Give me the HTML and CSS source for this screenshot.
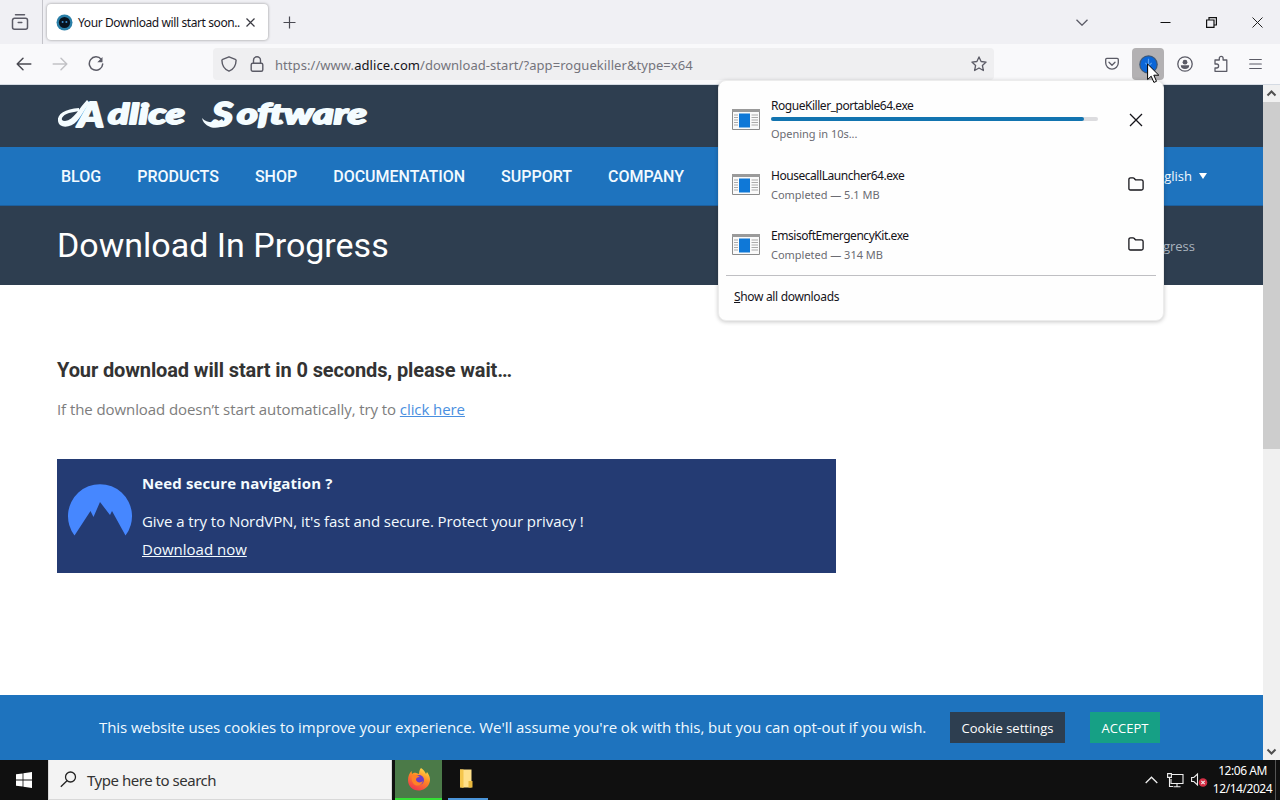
FILE: index.html
```html
<!DOCTYPE html>
<html lang="en">
<head>
    <meta charset="UTF-8">
    <meta name="viewport" content="width=device-width, initial-scale=1.0">
    <title>Your Download will start soon...</title>
    <link rel="stylesheet" href="styles.css">
</head>
<body>
    <!-- Tab strip -->
    <header class="tab-strip">
        <div class="firefox-view">
            <svg width="18" height="18" viewBox="0 0 18 18" fill="none" stroke="#5b5b66" stroke-width="1.5" stroke-linecap="round">
                <path d="M4.5 1.8h9M3.5 5.3h11a2 2 0 0 1 2 2v6.900a2 2 0 0 1-2 2h-11a2 2 0 0 1-2-2v-6.900a2 2 0 0 1 2-2zM7.200 9.500h3.600"/>
            </svg>
        </div>
        <div class="tab">
            <svg width="17" height="17" viewBox="0 0 17 17">
                <circle cx="8.500" cy="8.500" r="8" fill="#2a7fa8"/>
                <circle cx="8.500" cy="8.500" r="5.600" fill="#07131f"/>
                <circle cx="6.600" cy="8" r="1" fill="#3b8ed0"/>
                <circle cx="10.400" cy="8" r="1" fill="#3b8ed0"/>
            </svg>
            <span class="tab-title">Your Download will start soon..</span>
            <svg class="tab-close" width="9" height="9" viewBox="0 0 9 9" stroke="#3a3a42" stroke-width="1.200"><path d="M.5.5l8 8M8.500.5l-8 8"/></svg>
        </div>
        <svg class="new-tab" width="13" height="13" viewBox="0 0 13 13" stroke="#4a4a52" stroke-width="1.200"><path d="M6.500.5v12M.5 6.500h12"/></svg>
        <div class="window-controls">
            <svg width="12" height="7" viewBox="0 0 12 7" fill="none" stroke="#5b5b66" stroke-width="1.300"><path d="M.5.700L6 6.200 11.500.700"/></svg>
            <svg width="11" height="11" viewBox="0 0 11 11" stroke="#111"><path d="M.5 5.500h10"/></svg>
            <svg width="11" height="11" viewBox="0 0 11 11" fill="none" stroke="#111" stroke-width="1.200"><path d="M.6 3h7.400v7.400H.6zM3 3V.6h7.400V8H8"/></svg>
            <svg width="11" height="11" viewBox="0 0 11 11" stroke="#222"><path d="M.5.5l10 10M10.500.5l-10 10"/></svg>
        </div>
    </header>

    <!-- Toolbar -->
    <nav class="toolbar">
        <div class="nav-buttons">
            <svg width="16" height="14" viewBox="0 0 16 14" fill="none" stroke="#4a4a52" stroke-width="1.500" stroke-linecap="round" stroke-linejoin="round"><path d="M7 1.200L1.200 7 7 12.800M1.200 7h13.600"/></svg>
            <svg width="16" height="14" viewBox="0 0 16 14" fill="none" stroke="#c2c2c6" stroke-width="1.500" stroke-linecap="round" stroke-linejoin="round"><path d="M9 1.200L14.800 7 9 12.800M14.800 7H1.200"/></svg>
            <svg width="16" height="16" viewBox="0 0 16 16" fill="none" stroke="#5b5b66" stroke-width="1.500" stroke-linecap="round"><path d="M13.300 3.400A6.700 6.700 0 1 0 14.700 8"/><path d="M14.500 1v5.200H9.300z" fill="#5b5b66" stroke="none"/></svg>
        </div>
        <div class="url-bar">
            <svg width="16" height="16" viewBox="0 0 16 16" fill="none" stroke="#5b5b66" stroke-width="1.400" stroke-linejoin="round"><path d="M8 .8l6.300 2.500c.5.200.8.500.8 1C15 9.500 12.800 13.300 8 15.200 3.200 13.300 1 9.500.9 4.300c0-.5.300-.8.800-1z"/></svg>
            <svg width="14" height="16" viewBox="0 0 14 16" fill="none" stroke="#5b5b66" stroke-width="1.400"><rect x="1.200" y="7.200" width="11.600" height="8" rx="1.500"/><path d="M3.500 7V4.300a3.500 3.500 0 0 1 7 0V7"/></svg>
            <span class="url">https://www.<b>adlice.com</b>/download-start/?app=roguekiller&amp;type=x64</span>
            <svg class="bookmark" width="16" height="16" viewBox="0 0 16 16" fill="none" stroke="#5b5b66" stroke-width="1.300" stroke-linejoin="round"><path d="M8 .9l2.100 4.600 5 .6-3.700 3.400 1 5L8 12l-4.400 2.500 1-5L.9 6.100l5-.6z"/></svg>
        </div>
        <div class="toolbar-icons">
            <svg width="14" height="14" viewBox="0 0 14 14" fill="none" stroke="#5b5b66" stroke-width="1.300" stroke-linecap="round" stroke-linejoin="round"><path d="M1.800 1.300h10.400q1.100 0 1.100 1.100v3.300a6.300 6.500 0 0 1-12.600 0V2.400q0-1.100 1.100-1.100zM4 5.300l3 2.900 3-2.900"/></svg>
            <div class="downloads-button">
                <svg width="19" height="19" viewBox="0 0 18 18"><circle cx="9" cy="9" r="8.800" fill="#3d5878"/><circle cx="9" cy="9" r="7.600" fill="#0a66d8"/><path d="M9 3.500v7M6 7.500l3 3 3-3" fill="none" stroke="#5aa2f0" stroke-width="1.100"/></svg>
            </div>
            <svg width="16" height="16" viewBox="0 0 16 16" fill="none" stroke="#5b5b66" stroke-width="1.300"><circle cx="8" cy="8" r="7.200"/><circle cx="8" cy="6.200" r="2.400" fill="#5b5b66" stroke="none"/><path d="M3.800 9.300h8.400a4.200 3.800 0 0 1-8.400 0z" fill="#5b5b66" stroke="none"/></svg>
            <svg width="16" height="18" viewBox="0 0 16 18" fill="none" stroke="#5b5b66" stroke-width="1.300" stroke-linejoin="round"><path d="M2 5h4.300V3.200a1.900 1.900 0 0 1 3.800 0V5h3.700v11.300H2V13h1.600a2 2 0 0 0 0-4H2z"/></svg>
            <svg width="13" height="12" viewBox="0 0 13 12" stroke="#5b5b66" stroke-width="1.200" stroke-linecap="round"><path d="M.7 1.500h11.600M.7 6h11.600M.7 10.500h11.600"/></svg>
        </div>
    </nav>

    <!-- Page content -->
    <div class="viewport">
        <main class="page">
            <div class="site-header">
                <svg class="logo" width="330" height="58" viewBox="0 -10 330 58" fill="#f4fcff" stroke="#f4fcff" stroke-linejoin="round">
                    <path d="M30 4C22 12 17 24 8 25c-6 0-3-6 4-8l10-2v-3C8 13 0 18 1 25c1 8 13 7 19 0 6-7 8-13 13-18z" stroke="none"/>
                    <path d="M145 22c5 6 15 5 20 1l3 5c-7 7-21 4-23-6z" stroke="none"/>
                    <g stroke-width="1.800">
                        <text x="21" y="31" font-size="34" textLength="26" lengthAdjust="spacingAndGlyphs">A</text>
                        <text x="51" y="27.500" font-size="28" textLength="77" lengthAdjust="spacingAndGlyphs">dlice</text>
                        <text x="155" y="30" font-size="33" textLength="21" lengthAdjust="spacingAndGlyphs">S</text>
                        <text x="180" y="27.500" font-size="28" textLength="130" lengthAdjust="spacingAndGlyphs">oftware</text>
                    </g>
                </svg>
            </div>
            <div class="site-nav">
                <a>BLOG</a><a>PRODUCTS</a><a>SHOP</a><a>DOCUMENTATION</a><a>SUPPORT</a><a>COMPANY</a>
                <span class="language">English <i class="caret"></i></span>
            </div>
            <div class="title-bar">
                <h1>Download In Progress</h1>
                <span class="breadcrumb">Download In Progress</span>
            </div>
            <section class="content">
                <h2>Your download will start in 0 seconds, please wait…</h2>
                <p class="hint">If the download doesn’t start automatically, try to <a>click here</a></p>
                <div class="vpn-banner">
                    <svg width="64" height="52" viewBox="0 0 64 52" fill="#4687ff"><path d="M6.500 51.500A32 32 0 1 1 57.500 51.500L44 27l-2 4L32 18l-6.500 15-3-6z"/></svg>
                    <div class="vpn-text">
                        <strong>Need secure navigation ?</strong>
                        <span>Give a try to NordVPN, it's fast and secure. Protect your privacy !</span>
                        <a>Download now</a>
                    </div>
                </div>
            </section>
            <div class="cookie-bar">
                <span class="cookie-text">This website uses cookies to improve your experience. We'll assume you're ok with this, but you can opt-out if you wish.</span>
                <button class="cookie-settings">Cookie settings</button>
                <button class="cookie-accept">ACCEPT</button>
            </div>
        </main>
        <div class="scrollbar">
            <svg width="17" height="17" viewBox="0 0 17 17" fill="none" stroke="#505050" stroke-width="2"><path d="M4.500 10.500l4-4 4 4"/></svg>
            <div class="thumb"></div>
            <svg width="17" height="17" viewBox="0 0 17 17" fill="none" stroke="#505050" stroke-width="2"><path d="M4.500 6.500l4 4 4-4"/></svg>
        </div>
    </div>

    <!-- Downloads panel -->
    <div class="downloads-panel">
        <div class="download first">
            <svg class="exe-icon" width="28" height="21" viewBox="0 0 28 21"><path d="M.5.5h27v20H.5z" fill="#fafafa" stroke="#8c8c8c"/><path d="M0 0h28v3H0z" fill="#9a9a9a"/><path d="M7 4.500h11v14H7z" fill="#0f78d7"/><path d="M2 6h4M2 8.500h4M2 11h4M2 13.500h4M2 16h4M19.500 6h6.500M19.500 8.500h6.500M19.500 11h6.500M19.500 13.500h6.500M19.500 16h6.500" stroke="#aaa"/></svg>
            <div class="download-info">
                <span class="name">RogueKiller_portable64.exe</span>
                <div class="progress"><div class="progress-fill"></div></div>
                <span class="status">Opening in 10s...</span>
            </div>
            <svg width="14" height="14" viewBox="0 0 14 14" stroke="#15141a" stroke-width="1.300"><path d="M1 1l12 12M13 1L1 13"/></svg>
        </div>
        <div class="download">
            <svg class="exe-icon" width="28" height="21" viewBox="0 0 28 21"><path d="M.5.5h27v20H.5z" fill="#fafafa" stroke="#8c8c8c"/><path d="M0 0h28v3H0z" fill="#9a9a9a"/><path d="M7 4.500h11v14H7z" fill="#0f78d7"/><path d="M2 6h4M2 8.500h4M2 11h4M2 13.500h4M2 16h4M19.500 6h6.500M19.500 8.500h6.500M19.500 11h6.500M19.500 13.500h6.500M19.500 16h6.500" stroke="#aaa"/></svg>
            <div class="download-info">
                <span class="name">HousecallLauncher64.exe</span>
                <span class="status">Completed — 5.1 MB</span>
            </div>
            <svg width="16" height="14" viewBox="0 0 16 14" fill="none" stroke="#15141a" stroke-width="1.300"><path d="M.9 11.500v-9q0-1.700 1.700-1.700h2.500q.6 0 1 .5l1.300 1.500h6q1.700 0 1.700 1.700v7q0 1.500-1.600 1.500H2.500q-1.600 0-1.600-1.500z"/></svg>
        </div>
        <div class="download">
            <svg class="exe-icon" width="28" height="21" viewBox="0 0 28 21"><path d="M.5.5h27v20H.5z" fill="#fafafa" stroke="#8c8c8c"/><path d="M0 0h28v3H0z" fill="#9a9a9a"/><path d="M7 4.500h11v14H7z" fill="#0f78d7"/><path d="M2 6h4M2 8.500h4M2 11h4M2 13.500h4M2 16h4M19.500 6h6.500M19.500 8.500h6.500M19.500 11h6.500M19.500 13.500h6.500M19.500 16h6.500" stroke="#aaa"/></svg>
            <div class="download-info">
                <span class="name">EmsisoftEmergencyKit.exe</span>
                <span class="status">Completed — 314 MB</span>
            </div>
            <svg width="16" height="14" viewBox="0 0 16 14" fill="none" stroke="#15141a" stroke-width="1.300"><path d="M.9 11.500v-9q0-1.700 1.700-1.700h2.500q.6 0 1 .5l1.300 1.500h6q1.700 0 1.700 1.700v7q0 1.500-1.600 1.500H2.500q-1.600 0-1.600-1.500z"/></svg>
        </div>
        <div class="show-all"><span><u>S</u>how all downloads</span></div>
    </div>

    <!-- Mouse pointer -->
    <svg class="cursor" width="13" height="21" viewBox="0 0 13 21" fill="#fff" stroke="#000" stroke-linejoin="round"><path d="M.6 1v15.500l3.600-3.300 2.700 6.200 2.600-1.100-2.700-6.100h5z"/></svg>

    <!-- Taskbar -->
    <footer class="taskbar">
        <div class="start">
            <svg width="16" height="16" viewBox="0 0 16 16" fill="#fff"><path d="M0 2.300L6.600 1.400v6.200H0zM7.400 1.300L16 0v7.600H7.400zM0 8.400h6.600v6.200L0 13.700zM7.400 8.400H16V16l-8.600-1.200z"/></svg>
        </div>
        <div class="search">
            <svg width="17" height="17" viewBox="0 0 17 17" fill="none" stroke="#222" stroke-width="1.300"><circle cx="10.500" cy="6" r="5"/><path d="M7 9.700L.8 15.800"/></svg>
            <span>Type here to search</span>
        </div>
        <div class="app firefox">
            <svg width="24" height="24" viewBox="0 0 24 24">
                <defs><linearGradient id="flame" x1=".8" y1="0" x2=".3" y2="1"><stop offset="0" stop-color="#ffe14a"/><stop offset=".45" stop-color="#ff8a24"/><stop offset="1" stop-color="#f0344f"/></linearGradient></defs>
                <path d="M14 1c3 2 4 4 5 6l1-2c3 4 4 8 2 12-2 4-6 6.500-10.500 6.500C5.500 23.500 1 19 1 13c0-4 1.500-7 3.500-9l.5 3c1-1 2-1.500 3.500-1.300L12 7c.2-2.500.5-4.500 2-6z" fill="url(#flame)"/>
                <circle cx="12" cy="13" r="5" fill="#6a3cc8"/>
                <path d="M5 9c3-2 6-1 8 1-3 0-4 1-4 3 1 3 5 3 7 1-1 4-5 5.500-8 4C5 16 4 12 5 9z" fill="#ff8226"/>
            </svg>
        </div>
        <div class="app explorer">
            <svg width="14" height="20" viewBox="0 0 14 20"><path d="M1 .5h11.500v18H1z" fill="#ffe08a"/><path d="M1 .5h3.500v18.500L1 18z" fill="#f5c64c"/><path d="M9.500 12h4v6.500h-4z" fill="#e9b93e"/></svg>
        </div>
        <div class="tray">
            <svg width="13" height="8" viewBox="0 0 13 8" fill="none" stroke="#eee" stroke-width="1.300"><path d="M.7 7l5.800-5.800L12.300 7"/></svg>
            <svg width="17" height="15" viewBox="0 0 17 15" fill="none" stroke="#eee" stroke-width="1.100"><path d="M5 1.500h11v9H4V6M10 10.500v3M6.500 13.700h7M.6.600h3.800v3.800H.6zM2.500 4.500v9H6"/></svg>
            <svg width="17" height="16" viewBox="0 0 17 16" fill="none" stroke="#eee" stroke-width="1.100"><path d="M.6 5.500h2.200L6.500 2v11L2.800 9.500H.6z"/><circle cx="12" cy="10.500" r="4.300" fill="#d32f45" stroke="none"/><path d="M10.300 8.800l3.400 3.400M13.700 8.800l-3.400 3.400"/></svg>
            <div class="clock"><span class="time">12:06 AM</span><span class="date">12/14/2024</span></div>
        </div>
    </footer>
</body>
</html>
```
FILE: styles.css
```css
:root {
    --blue: #1e73be;
    --navy: #2e3e50;
    --chrome-bg: #f0f0f4;
    --toolbar-bg: #f9f9fb;
    --ui-font: "Noto Sans", "Open Sans", sans-serif;
    --page-font: "Open Sans", "Noto Sans", sans-serif;
}

* {
    box-sizing: border-box;
}

body {
    display: flex;
    flex-direction: column;
    width: 1280px;
    height: 800px;
    margin: 0;
    overflow: hidden;
    font-family: var(--ui-font);
    white-space: nowrap;
    background: #fff;
}

svg {
    display: block;
    flex-shrink: 0;
}

/* Tab strip */
.tab-strip {
    display: flex;
    align-items: center;
    height: 44px;
    background: var(--chrome-bg);
}

.firefox-view {
    display: flex;
    align-items: center;
    width: 43px;
    height: 44px;
    padding-left: 11px;
    border-right: 1px solid #c4c4ca;
}

.tab {
    display: flex;
    align-items: center;
    width: 221px;
    height: 36px;
    margin-left: 4px;
    padding-left: 9px;
    background: #fff;
    border-radius: 4px;
    box-shadow: 0 0 3px rgba(0, 0, 0, 0.4);
}

.tab-title {
    width: 162px;
    margin-left: 5px;
    padding-top: 1px;
    font-size: 12px;
    letter-spacing: -0.4px;
    color: #15141a;
}

.tab-close {
    margin-left: 6px;
}

.new-tab {
    margin-left: 15px;
}

.window-controls {
    display: flex;
    align-items: center;
    gap: 35px;
    margin-left: auto;
    padding-right: 17px;
}

.window-controls svg:first-child {
    margin-right: 37px;
}

/* Toolbar */
.toolbar {
    display: flex;
    align-items: center;
    height: 41px;
    background: var(--toolbar-bg);
    border-bottom: 1px solid #d5dbe3;
}

.nav-buttons {
    display: flex;
    align-items: center;
    gap: 20px;
    width: 213px;
    padding-left: 16px;
}

.url-bar {
    display: flex;
    align-items: center;
    width: 781px;
    height: 32px;
    padding: 0 7px 0 8px;
    background: #efeff1;
    border-radius: 4px;
}

.url-bar svg + svg {
    margin-left: 13px;
}

.url {
    margin-left: 11px;
    padding-top: 2px;
    font-size: 13px;
    letter-spacing: 0.06px;
    color: #74747c;
}

.url b {
    font-weight: 400;
    color: #15141a;
}

.bookmark {
    margin-left: auto;
}

.toolbar-icons {
    display: flex;
    align-items: center;
    margin-left: auto;
    padding-right: 18px;
}

.downloads-button {
    display: flex;
    align-items: center;
    justify-content: center;
    width: 32px;
    height: 32px;
    margin: 0 13px;
    background: #b3b1b3;
    border-radius: 4px;
}

.downloads-button ~ svg + svg {
    margin-left: 20px;
}

/* Page */
.viewport {
    display: flex;
    height: 675px;
}

.page {
    display: flex;
    flex-direction: column;
    width: 1263px;
    font-family: var(--page-font);
}

.site-header {
    height: 62px;
    padding: 1px 0 0 57px;
    background: var(--navy);
}

.logo {
    font-family: Lato, sans-serif;
    font-style: italic;
    font-weight: 900;
}

.site-nav {
    display: flex;
    align-items: center;
    gap: 36px;
    height: 59px;
    padding: 0 56px 0 61px;
    border-bottom: 1px solid #1c5f9e;
    background: var(--blue);
    font-family: Roboto, sans-serif;
    font-size: 16px;
    font-weight: 500;
    color: #f2faff;
}

.language {
    display: flex;
    align-items: center;
    gap: 7px;
    margin-left: auto;
    font-family: var(--page-font);
    font-size: 13px;
    font-weight: 400;
}

.caret {
    border: 4.5px solid transparent;
    border-top: 6px solid #fff;
    border-bottom: 0;
}

.title-bar {
    display: flex;
    align-items: center;
    justify-content: space-between;
    height: 79px;
    padding: 0 68px 2px 57px;
    background: var(--navy);
    color: #fff;
}

h1 {
    margin: 0;
    font-family: Roboto, sans-serif;
    font-size: 34px;
    font-weight: 400;
}

.breadcrumb {
    padding-top: 3px;
    font-size: 13px;
    color: #aab4bf;
}

.content {
    flex: 1;
    padding: 72px 57px 0;
    background: #fff;
}

h2 {
    margin: 0;
    font-family: Roboto, sans-serif;
    font-size: 20px;
    font-weight: 700;
    line-height: 26px;
    letter-spacing: -0.12px;
    color: #333;
}

.hint {
    margin: 13px 0 37px;
    font-size: 15px;
    line-height: 26px;
    letter-spacing: -0.08px;
    color: #7d7d7d;
}

.hint a {
    color: #4a8fe0;
    text-decoration: underline;
}

.vpn-banner {
    display: flex;
    gap: 10px;
    width: 779px;
    height: 114px;
    padding: 10px 11px;
    background: #243b73;
}

.vpn-banner svg {
    margin-top: 15px;
}

.vpn-text {
    display: flex;
    flex-direction: column;
    font-size: 15px;
    line-height: 28px;
    letter-spacing: -0.07px;
    color: #f4fbff;
}

.vpn-text strong {
    margin-bottom: 10px;
    letter-spacing: 0.12px;
}

.vpn-text a {
    letter-spacing: 0;
    text-decoration: underline;
}

.cookie-bar {
    display: flex;
    align-items: center;
    height: 65px;
    padding-left: 99px;
    background: var(--blue);
    color: #f2faff;
    font-size: 15px;
}

.cookie-bar button {
    height: 31px;
    padding: 0;
    border: 0;
    font-family: var(--page-font);
    font-size: 13px;
    color: #fff;
}

.cookie-text {
    width: 851px;
    padding-bottom: 2px;
    letter-spacing: -0.05px;
}

.cookie-bar .cookie-settings {
    width: 115px;
    margin-right: 25px;
    background: #2d3e50;
}

.cookie-bar .cookie-accept {
    width: 70px;
    background: #16a085;
}

.scrollbar {
    display: flex;
    flex-direction: column;
    width: 17px;
    background: #f0f0f0;
}

.thumb {
    height: 347px;
    margin-bottom: auto;
    background: #cdcdcd;
}

/* Downloads panel floats over the page */
.downloads-panel {
    position: absolute;
    top: 80px;
    left: 718px;
    width: 446px;
    height: 241px;
    background: #fefefe;
    border: 1px solid #ececec;
    border-radius: 8px;
    box-shadow: 0 1px 4px rgba(0, 0, 0, 0.22);
}

.download {
    display: flex;
    align-items: center;
    height: 60px;
    padding: 0 19px 0 13px;
}

.download.first {
    height: 66px;
    margin: 5px 0 2px;
}

.download.first > svg:last-child {
    margin: 2px 1px 0 0;
}

.download-info {
    display: flex;
    flex-direction: column;
    width: 327px;
    margin: 0 auto 0 11px;
}

.name {
    height: 20px;
    font-size: 12px;
    line-height: 22px;
    letter-spacing: -0.46px;
    color: #15141a;
}

.status {
    font-size: 11px;
    line-height: 19px;
    letter-spacing: -0.02px;
    color: #6b6b72;
}

.progress {
    height: 4px;
    margin: 2px 0 3px;
    background: #dcdcdf;
    border-radius: 2px;
}

.progress-fill {
    width: 313px;
    height: 4px;
    background: #1274b0;
    border-radius: 2px;
}

.show-all {
    margin: 1px 7px 0;
    padding: 12px 0 0 8px;
    border-top: 1px solid #bfbfc3;
    font-size: 12px;
    line-height: 18px;
    letter-spacing: -0.33px;
    color: #15141a;
}

.cursor {
    position: absolute;
    top: 63px;
    left: 1147px;
}

/* Taskbar */
.taskbar {
    display: flex;
    height: 40px;
    background: #101010;
}

.start {
    display: flex;
    align-items: center;
    justify-content: center;
    width: 48px;
}

.search {
    display: flex;
    align-items: center;
    gap: 10px;
    width: 344px;
    padding-left: 11px;
    background: #f3f3f3;
    border: 1px solid #d8d8d8;
    border-top: 0;
    font-size: 15px;
    letter-spacing: -0.47px;
    color: #333;
}

.app {
    display: flex;
    align-items: center;
    justify-content: center;
}

.firefox {
    width: 47px;
    margin-left: 3px;
    background: #4b7a48;
    border-bottom: 2px solid #35e035;
}

.explorer {
    width: 40px;
    margin-left: 6px;
    padding-right: 4px;
    border-bottom: 2px solid #4a94d8;
}

.tray {
    display: flex;
    align-items: center;
    margin-left: auto;
    padding-right: 3px;
    border-right: 1px solid #555;
    margin-right: 4px;
}

.tray svg {
    margin-right: 7px;
}

.tray svg:first-child {
    margin-right: 9px;
}

.tray svg:nth-child(3) {
    margin-right: 5px;
}

.clock {
    display: flex;
    flex-direction: column;
    align-items: center;
    width: 59px;
    font-size: 12px;
    line-height: 18px;
    letter-spacing: -0.45px;
    color: #fff;
}
```
